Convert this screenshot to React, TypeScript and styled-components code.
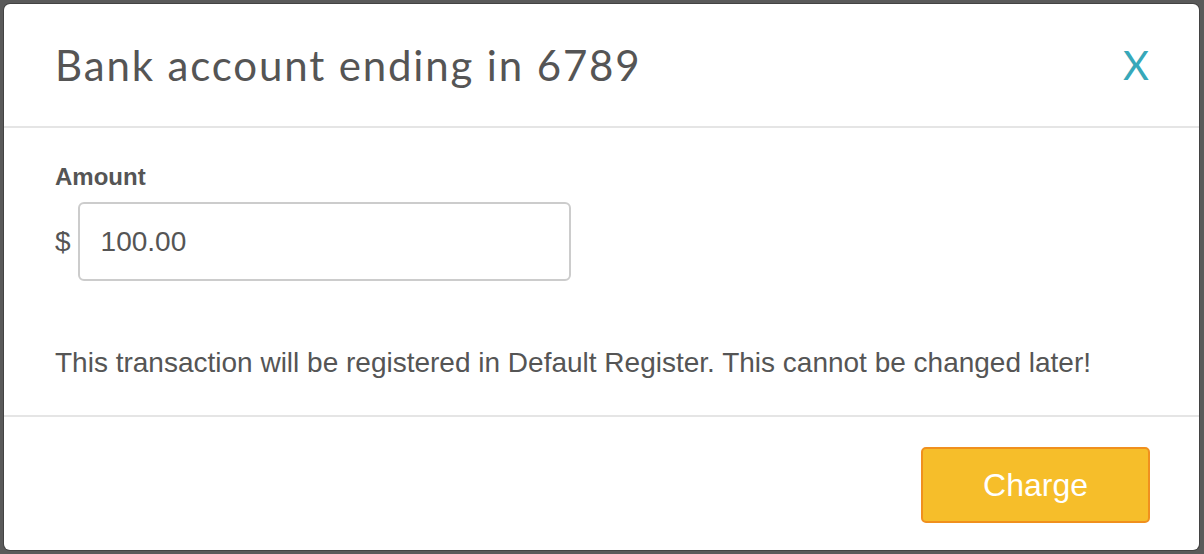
import React from 'react';
import styled, { createGlobalStyle } from 'styled-components';

// ============================================================================
// Charge Bank Account Modal
// ============================================================================

const GlobalStyle = createGlobalStyle`
  html, body {
    margin: 0;
    padding: 0;
    background: #5a5a5a;
  }
  * {
    box-sizing: border-box;
  }
`;

const Backdrop = styled.div`
  width: 1204px;
  height: 554px;
  padding: 4px 5px 4px 4px;
  background: #5a5a5a;
  overflow: hidden;
`;

const Modal = styled.div`
  display: flex;
  flex-direction: column;
  height: 100%;
  background: #fff;
  border-radius: 6px;
  box-shadow: 0 0 0 1px rgba(0, 0, 0, 0.25);
  overflow: hidden;
  font-family: 'Liberation Sans', Arial, sans-serif;
  color: #555;
`;

const Header = styled.div`
  display: flex;
  align-items: center;
  justify-content: space-between;
  height: 124px;
  flex-shrink: 0;
  padding: 0 50px 0 51px;
  border-bottom: 2px solid #e5e5e5;
`;

const Title = styled.h1`
  margin: 0;
  font-family: Lato, 'Open Sans', sans-serif;
  font-weight: 400;
  font-size: 42px;
  color: #555;
  letter-spacing: 1.85px;
`;

const CloseButton = styled.button`
  border: none;
  background: none;
  padding: 0;
  font-family: Lato, 'Open Sans', sans-serif;
  font-weight: 400;
  font-size: 40px;
  color: #37a8b9;
  cursor: pointer;
`;

const Body = styled.div`
  display: flex;
  flex-direction: column;
  height: 289px;
  flex-shrink: 0;
  padding: 35px 51px 0;
  border-bottom: 2px solid #e5e5e5;
`;

const Label = styled.label`
  font-weight: 700;
  font-size: 24px;
  color: #555;
  margin-bottom: 11px;
`;

const AmountRow = styled.div`
  display: flex;
  align-items: center;
  gap: 7px;
`;

const Currency = styled.span`
  font-size: 28px;
  color: #555;
`;

const AmountInput = styled.input`
  width: 493px;
  height: 79px;
  padding: 0 21px;
  border: 2px solid #ccc;
  border-radius: 6px;
  font-family: 'Liberation Sans', Arial, sans-serif;
  font-size: 28px;
  color: #555;
  outline: none;
`;

const Notice = styled.p`
  margin: 66px 0 0;
  font-size: 28px;
  color: #555;
`;

const Footer = styled.div`
  display: flex;
  flex: 1;
  justify-content: flex-end;
  align-items: flex-start;
  padding: 30px 49px 0;
`;

const ChargeButton = styled.button`
  width: 229px;
  height: 76px;
  background: #f6be2a;
  border: 2px solid #f0901e;
  border-radius: 5px;
  color: #fff;
  font-family: 'Liberation Sans', Arial, sans-serif;
  font-size: 32px;
  cursor: pointer;
`;

export default function App() {
  return (
    <>
      <GlobalStyle />
      <Backdrop>
        <Modal>
          <Header>
            <Title>Bank account ending in 6789</Title>
            <CloseButton>X</CloseButton>
          </Header>
          <Body>
            <Label>Amount</Label>
            <AmountRow>
              <Currency>$</Currency>
              <AmountInput defaultValue="100.00" />
            </AmountRow>
            <Notice>
              This transaction will be registered in Default Register. This cannot be changed later!
            </Notice>
          </Body>
          <Footer>
            <ChargeButton>Charge</ChargeButton>
          </Footer>
        </Modal>
      </Backdrop>
    </>
  );
}
